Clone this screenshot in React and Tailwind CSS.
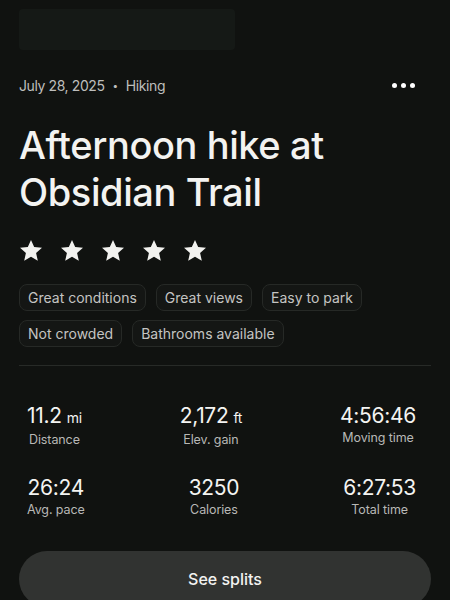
import React from "react";

const Star = () => (
  <svg width="26" height="25" viewBox="0 0 24 24" fill="#f2f2ef">
    <path d="M12 1.8l3.05 6.9 7.5.7-5.67 5 1.67 7.4L12 17.9l-6.55 3.9 1.67-7.4-5.67-5 7.5-.7z" />
  </svg>
);

const Chip = ({ children }) => (
  <div className="h-[27px] px-[8px] flex items-center rounded-[8px] border border-[#262926] bg-[#141614] text-[14px] text-[#c4c4c2]">
    {children}
  </div>
);

const Stat = ({ value, unit, label }) => (
  <div className="flex flex-col items-center">
    <div className="text-[21px] leading-[26px] text-[#f4f4f2] tracking-[-0.3px]">
      {value}
      {unit && <span className="text-[14px] ml-[5px]">{unit}</span>}
    </div>
    <div className="text-[12.5px] leading-[16px] text-[#b8b8b6] mt-[1px] tracking-[-0.1px]">{label}</div>
  </div>
);

export default function App() {
  return (
    <div
      className="w-[450px] h-[600px] overflow-hidden bg-[#101210] px-[19px]"
      style={{ fontFamily: "Inter, 'Noto Sans', sans-serif" }}
    >
      <div className="mt-[9px] w-[216px] h-[41px] rounded-[4px] bg-[#151916]" />
      <div className="mt-[25px] flex items-center justify-between">
        <div className="flex items-center text-[14px] text-[#bebebc] tracking-[-0.4px]">
          <span>July 28, 2025</span>
          <span className="mx-[8px] text-[10px]">•</span>
          <span>Hiking</span>
        </div>
        <div className="flex gap-[4px] mr-[16px]">
          <div className="w-[5px] h-[5px] rounded-full bg-white" />
          <div className="w-[5px] h-[5px] rounded-full bg-white" />
          <div className="w-[5px] h-[5px] rounded-full bg-white" />
        </div>
      </div>
      <h1 className="mt-[26px] text-[38px] leading-[47px] font-medium text-[#f3f3f1] tracking-[-0.4px]">
        Afternoon hike at
        <br />
        Obsidian Trail
      </h1>
      <div className="mt-[22px] flex gap-[15px] ml-[-1px]">
        <Star />
        <Star />
        <Star />
        <Star />
        <Star />
      </div>
      <div className="mt-[21px] flex flex-wrap gap-x-[10px] gap-y-[9px]">
        <Chip>Great conditions</Chip>
        <Chip>Great views</Chip>
        <Chip>Easy to park</Chip>
        <Chip>Not crowded</Chip>
        <Chip>Bathrooms available</Chip>
      </div>
      <div className="mt-[18px] h-px bg-[#272a27]" />
      <div className="pl-[8px] pr-[15px]">
        <div className="mt-[37px] flex justify-between">
          <Stat value="11.2" unit="mi" label="Distance" />
          <Stat value="2,172" unit="ft" label="Elev. gain" />
          <Stat value="4:56:46" label="Moving time" />
        </div>
        <div className="mt-[27px] flex justify-between">
          <Stat value="26:24" label="Avg. pace" />
          <Stat value="3250" label="Calories" />
          <Stat value="6:27:53" label="Total time" />
        </div>
      </div>
      <div className="mt-[33px] h-[56px] rounded-full bg-[#313331] flex items-center justify-center text-[16px] font-medium text-[#f3f3f1]">
        See splits
      </div>
    </div>
  );
}
